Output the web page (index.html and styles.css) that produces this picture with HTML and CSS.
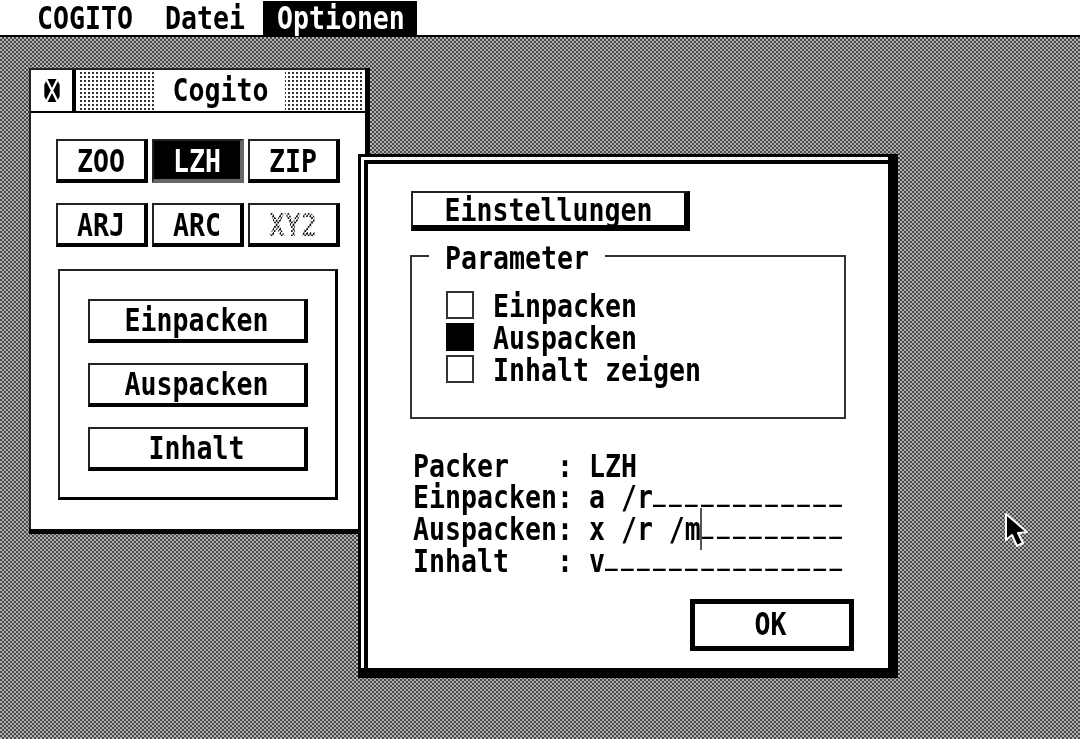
FILE: index.html
```html
<!DOCTYPE html>
<html lang="de">
<head>
<meta charset="utf-8">
<title>Cogito</title>
<link rel="stylesheet" href="styles.css">
</head>
<body>
<div class="screen">
  <header class="menubar">
    <div class="menu-item"><span class="t">COGITO</span></div>
    <div class="menu-item"><span class="t">Datei</span></div>
    <div class="menu-item active"><span class="t">Optionen</span></div>
  </header>
  <main class="desktop">
    <section class="window">
      <div class="titlebar">
        <div class="closebox">
          <svg class="close-icon" viewBox="0 0 16 24" width="16" height="23">
            <path d="M3 0H13L16 6V18L13 24H3L0 18V6Z" fill="#000"/>
            <path d="M2 0L14 24M14 0L2 24" stroke="#fff" stroke-width="2.4" fill="none"/>
            <path d="M5 2H11L8 8ZM5 22H11L8 16Z" fill="#000"/>
          </svg>
        </div>
        <div class="title-fill"><div class="title-label"><span class="t">Cogito</span></div></div>
      </div>
      <div class="window-body">
        <div class="packer-grid">
          <button class="btn"><span class="t">ZOO</span></button>
          <button class="btn selected"><span class="t">LZH</span></button>
          <button class="btn"><span class="t">ZIP</span></button>
          <button class="btn"><span class="t">ARJ</span></button>
          <button class="btn"><span class="t">ARC</span></button>
          <button class="btn"><span class="t disabled">XY2</span></button>
        </div>
        <div class="action-box">
          <button class="btn"><span class="t">Einpacken</span></button>
          <button class="btn"><span class="t">Auspacken</span></button>
          <button class="btn"><span class="t">Inhalt</span></button>
        </div>
      </div>
    </section>

    <section class="dialog">
      <div class="dialog-inner">
        <button class="btn settings"><span class="t">Einstellungen</span></button>
        <fieldset class="params">
          <legend class="params-legend"><span class="t">Parameter</span></legend>
          <div class="check-row"><span class="check"></span><span class="t">Einpacken</span></div>
          <div class="check-row"><span class="check on"></span><span class="t">Auspacken</span></div>
          <div class="check-row"><span class="check"></span><span class="t">Inhalt zeigen</span></div>
        </fieldset>
        <div class="fields">
          <div class="field"><span class="t">Packer   : LZH</span></div>
          <div class="field"><span class="t">Einpacken: a /r<span class="u">____________</span></span></div>
          <div class="field"><span class="caret-host"><span class="t">Auspacken: x /r /m<span class="u">_________</span></span><span class="caret"></span></span></div>
          <div class="field"><span class="t">Inhalt   : v<span class="u">_______________</span></span></div>
        </div>
        <button class="btn ok"><span class="t">OK</span></button>
      </div>
    </section>

    <svg class="pointer" viewBox="0 0 26 36" width="26" height="36">
      <path d="M2 1V27L8 22L13 33L19 30L14 20L23 19Z" fill="#000" stroke="#fff" stroke-width="2" stroke-linejoin="round"/>
    </svg>
  </main>
</div>
</body>
</html>
```
FILE: styles.css
```css
* { box-sizing: border-box; }
html, body { margin: 0; padding: 0; }
body {
  width: 1080px;
  height: 739px;
  overflow: hidden;
  background: #fff;
  color: #000;
  font-family: "DejaVu Sans Mono", "Liberation Mono", monospace;
  font-weight: 700;
  font-size: 26.57px;
  line-height: 32px;
}
.screen {
  display: flex;
  flex-direction: column;
  width: 1080px;
  height: 739px;
  filter: blur(0.4px);
}
.t {
  display: inline-block;
  white-space: pre;
  transform: scaleY(1.18);
  line-height: 27px;
}
.menubar {
  display: flex;
  flex: none;
  gap: 6px;
  height: 37px;
  padding: 1px 0 0 23px;
  border-bottom: 2px solid #000;
  background: #fff;
}
.menu-item { padding: 1px 12px 0 14px; }
.menu-item.active { background: #000; color: #fff; }
.desktop {
  position: relative;
  flex: 1;
  overflow: hidden;
  background: repeating-conic-gradient(#484848 0 25%, #b0b0b0 0 50%) 0 0 / 4px 4px;
}
.window {
  position: absolute;
  left: 29px;
  top: 31px;
  width: 336px;
  height: 461px;
  background: #fff;
  border-left: 2px solid #222;
  border-top: 2px solid #222;
  box-shadow: 5px 0 0 #000, 0 5px 0 #000, 5px 5px 0 #000;
}
.titlebar {
  display: grid;
  grid-template-columns: 41px 1fr;
  column-gap: 4px;
  height: 43px;
  background: #000;
  padding-bottom: 2px;
}
.closebox {
  display: flex;
  align-items: center;
  justify-content: center;
  background: #fff;
}
.close-icon { display: block; }
.title-fill {
  display: flex;
  justify-content: center;
  align-items: center;
  background: conic-gradient(#333 25%, #fff 0) 0 0 / 4px 4px;
  border: 2px solid #fff;
  border-bottom-width: 1px;
}
.title-label { padding: 2px 17px 0; background: #fff; height: 100%; }
.window-body { padding: 26px 25px 28px 25px; }
.packer-grid {
  display: grid;
  grid-template-columns: repeat(3, 92px);
  grid-auto-rows: 44px;
  gap: 20px 4px;
}
.btn {
  display: flex;
  align-items: center;
  justify-content: center;
  margin: 0;
  padding: 0;
  font: inherit;
  color: inherit;
  background: #fff;
  border: 2px solid #222;
  border-right-width: 4px;
  border-bottom-width: 4px;
  border-right-color: #000;
  border-bottom-color: #000;
}
.packer-grid .btn { padding-top: 1px; }
.btn.selected { background: #000; color: #fff; border-color: #222 #666 #666 #222; }
.disabled {
  color: transparent;
  background: repeating-conic-gradient(#000 0 25%, #fff 0 50%) 0 0 / 3.375px 3.7px;
  -webkit-background-clip: text;
  background-clip: text;
}
.action-box {
  display: flex;
  flex-direction: column;
  gap: 20px;
  align-items: center;
  width: 280px;
  height: 231px;
  margin: 22px 2px 0;
  padding-top: 28px;
  border: 2px solid #222;
  border-right: 3px solid #000;
  border-bottom: 3px solid #000;
}
.action-box .btn { width: 220px; height: 44px; flex: none; padding-bottom: 2px; }
.dialog {
  position: absolute;
  left: 358px;
  top: 117px;
  width: 540px;
  height: 524px;
  padding: 3px 0 0 3px;
  background:
    linear-gradient(to left, #000 10px, transparent 10px),
    linear-gradient(to top, #000 10px, #fff 10px);
  border-left: 3px solid #000;
  border-top: 3px solid #000;
}
.dialog-inner {
  display: flex;
  flex-direction: column;
  align-items: flex-start;
  height: 100%;
  padding: 27px 0 0 43px;
  background: #fff;
  border-style: solid;
  border-color: #000;
  border-width: 4px 10px 10px 4px;
}
.btn.settings {
  width: 279px;
  height: 40px;
  flex: none;
  padding-top: 1px;
  border-right-width: 6px;
  border-bottom-width: 6px;
}
.params {
  width: 436px;
  margin: 9px 0 0 -1px;
  padding: 17px 0 32px 34px;
  border: 2px solid #333;
  min-inline-size: 0;
}
.params-legend {
  margin-left: -17px;
  padding: 2px 16px 0;
  height: 32px;
}
.check-row {
  display: flex;
  align-items: center;
  gap: 19px;
  height: 32px;
}
.check {
  flex: none;
  width: 28px;
  height: 28px;
  border: 2px solid #333;
}
.check.on { background: #000; border-color: #000; }
.fields { margin: 31px 0 0 2px; }
.field { height: 32px; }
.u {
  position: relative;
  top: -6px;
  font-size: 21px;
  letter-spacing: 3.4px;
}
.caret-host { position: relative; display: inline-block; }
.caret {
  position: absolute;
  left: 287px;
  top: -6px;
  width: 2px;
  height: 42px;
  background: #555;
}
.btn.ok {
  width: 164px;
  height: 52px;
  flex: none;
  margin: 21px 0 0 279px;
  padding: 0 3px 4px 0;
  border: 5px solid #000;
}
.pointer {
  position: absolute;
  left: 1004px;
  top: 476px;
}
```
